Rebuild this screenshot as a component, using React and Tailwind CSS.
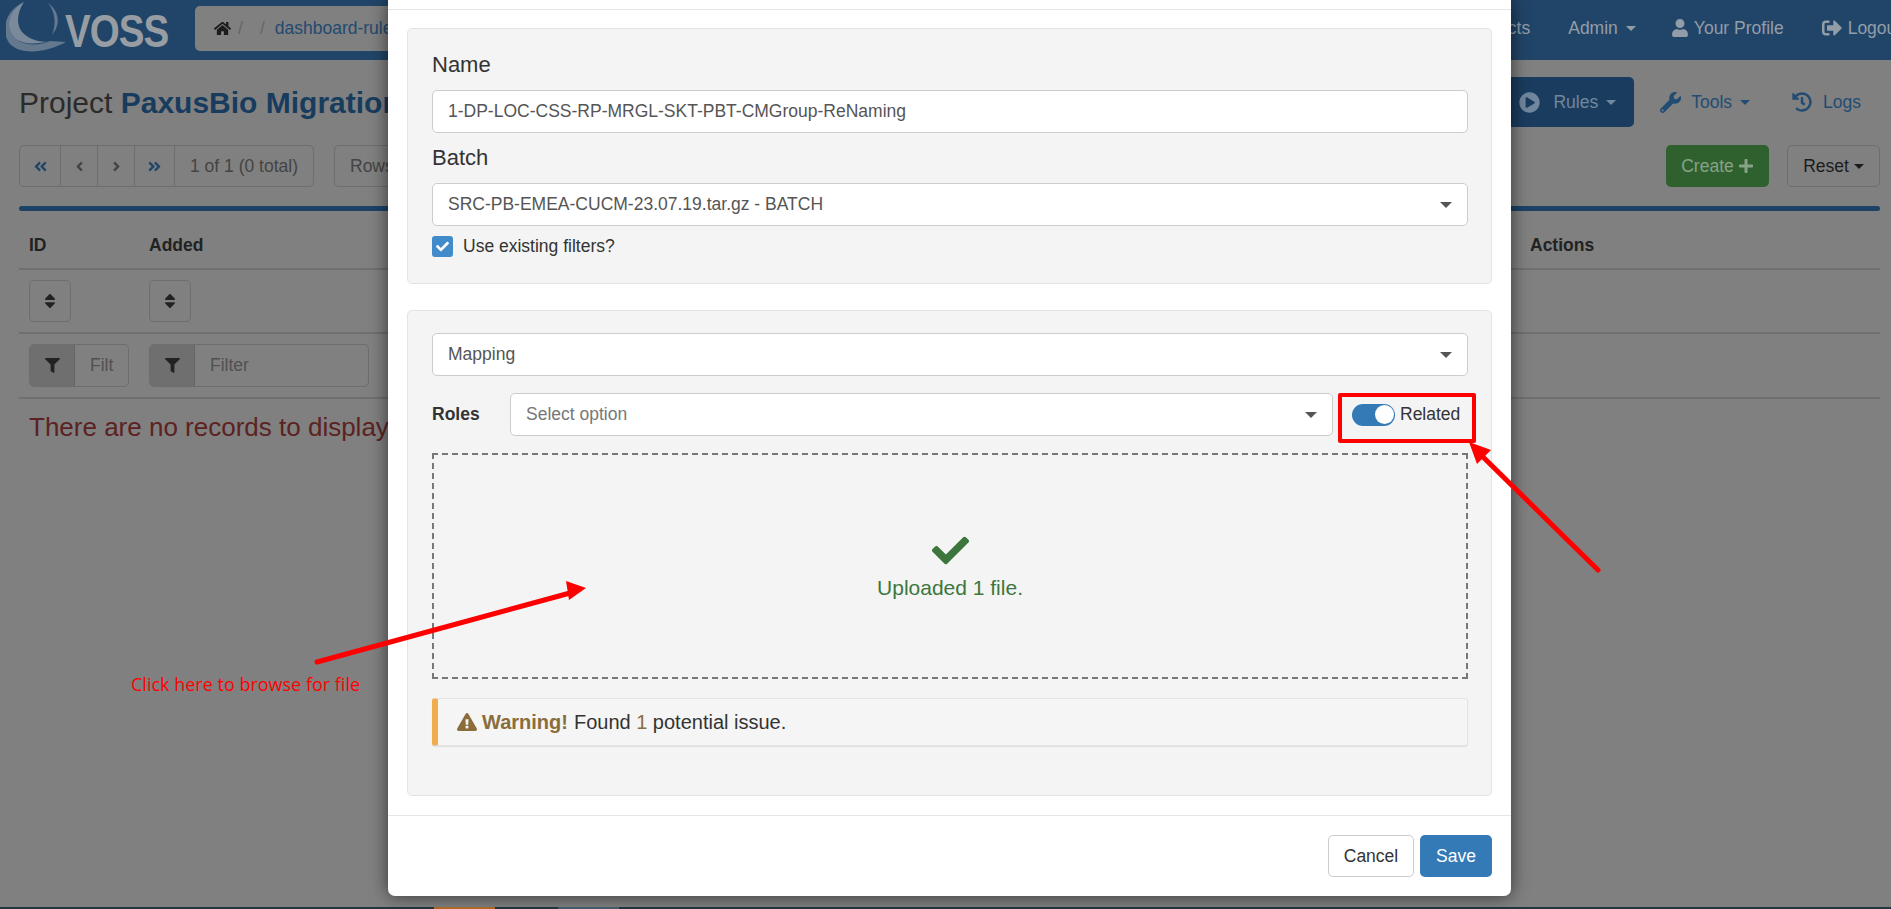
import {
  FaHome,
  FaCheck,
  FaExclamationTriangle,
  FaFilter,
  FaSort,
  FaPlus,
  FaUser,
  FaSignOutAlt,
  FaAngleDoubleLeft,
  FaAngleDoubleRight,
  FaAngleLeft,
  FaAngleRight,
  FaPlayCircle,
  FaWrench,
  FaHistory,
} from "react-icons/fa";

// triangulito de bootstrap para dropdowns
function Caret({ className = "" }) {
  return (
    <span
      className={`inline-block w-0 h-0 border-x-[5px] border-x-transparent border-t-[5px] ${className}`}
    />
  );
}

function SelectBox({ text, muted, className = "" }) {
  return (
    <div
      className={`h-[43px] bg-white border border-[#ccc] rounded-[5px] flex items-center justify-between pl-[15px] pr-[15px] ${className}`}
    >
      <span className={muted ? "text-[#777]" : "text-[#555]"}>{text}</span>
      <span className="w-0 h-0 border-x-[6px] border-x-transparent border-t-[6px] border-t-[#555]" />
    </div>
  );
}

function Logo() {
  return (
    <div className="w-[195px] shrink-0 flex items-center pl-[6px]">
      <svg width="60" height="56" viewBox="0 0 60 56" className="shrink-0 mt-[-4px]">
        <path
          d="M18 2 C4 9 -1 24 6 35 C13 45 30 47 44 41 L60 42 C42 52 16 56 4 44 C-6 32 -1 10 18 2 Z"
          fill="#64788e"
        />
        <path
          d="M18 2 C10 14 10 27 18 34 C26 41 38 43 44 41 C30 45 13 45 6 35 C-1 24 4 9 18 2 Z"
          fill="#7a8a9b"
        />
        <path d="M42 3 C52 10 56 23 46 35 C50 25 50 13 42 3 Z" fill="#64788e" />
      </svg>
      <span className="text-[47px] leading-none font-bold text-[#979da3] tracking-tight scale-x-[0.82] origin-left -ml-[1px]">
        VOSS
      </span>
    </div>
  );
}

function NavBar() {
  return (
    <div className="h-[60px] shrink-0 bg-[#214568] flex items-center text-[#939da8]">
      <Logo />
      <div className="w-[1000px] h-[45px] shrink-0 bg-[#808080] rounded-[5px] flex items-center pl-[19px] mt-[-3px]">
        <FaHome className="text-[#1c1c1c] text-[17px]" />
        <span className="ml-[7px] text-[#666]">/</span>
        <span className="ml-[17px] text-[#666]">/</span>
        <span className="ml-[10px] text-[#234a70]">dashboard-rules</span>
      </div>
      <div className="shrink-0 ml-[272px] flex items-center mt-[-4px]">
        <span>Projects</span>
        <span className="ml-[38px]">Admin</span>
        <Caret className="ml-[8px] border-t-[#939da8]" />
        <FaUser className="ml-[35px] text-[18px]" />
        <span className="ml-[5px]">Your Profile</span>
        <FaSignOutAlt className="ml-[38px] text-[20px]" />
        <span className="ml-[6px]">Logout</span>
      </div>
    </div>
  );
}

function Pager() {
  const cell = "h-full flex items-center justify-center border-r border-[#6d6d6d]";
  return (
    <div className="h-[42px] w-[295px] border border-[#6d6d6d] rounded-[5px] flex items-center text-[#444]">
      <div className={`${cell} w-[41px] text-[#1f4568] text-[15px]`}>
        <FaAngleDoubleLeft />
      </div>
      <div className={`${cell} w-[37px] text-[15px]`}>
        <FaAngleLeft />
      </div>
      <div className={`${cell} w-[37px] text-[15px]`}>
        <FaAngleRight />
      </div>
      <div className={`${cell} w-[40px] text-[#1f4568] text-[15px]`}>
        <FaAngleDoubleRight />
      </div>
      <div className="flex-1 text-center">1 of 1 (0 total)</div>
    </div>
  );
}

function FilterBox({ width, text }) {
  return (
    <div className={`${width} h-[43px] border border-[#6d6d6d] rounded-[5px] flex items-center overflow-hidden`}>
      <div className="w-[45px] h-full shrink-0 bg-[#6f6f6f] border-r border-[#666] flex items-center justify-center text-[#222] text-[15px]">
        <FaFilter />
      </div>
      <span className="pl-[15px] text-[#505050]">{text}</span>
    </div>
  );
}

function SortBtn() {
  return (
    <div className="w-[42px] h-[42px] border border-[#6d6d6d] rounded-[5px] flex items-center justify-center text-[#222] text-[18px]">
      <FaSort />
    </div>
  );
}

function BackgroundPage() {
  return (
    <div className="h-screen overflow-hidden bg-[#808080] flex flex-col">
      <NavBar />
      <div className="flex-1 pl-[19px] pr-[11px] text-[#222]">
        <div className="mt-[17px] h-[50px] flex items-center justify-between">
          <h1 className="text-[30px] text-[#2b2b2b]">
            Project <span className="font-bold text-[#173c5e]">PaxusBio Migration</span>
          </h1>
          <div className="flex items-center text-[#234c73]">
            <div className="h-[50px] rounded-[5px] bg-[#1a3d5f] text-[#71879d] flex items-center pl-[19px] pr-[18px]">
              <FaPlayCircle className="text-[21px]" />
              <span className="ml-[13px]">Rules</span>
              <Caret className="ml-[8px] border-t-[#71879d]" />
            </div>
            <FaWrench className="ml-[26px] text-[21px]" />
            <span className="ml-[10px]">Tools</span>
            <Caret className="ml-[8px] border-t-[#234c73]" />
            <FaHistory className="ml-[42px] text-[20px]" />
            <span className="ml-[11px] mr-[19px]">Logs</span>
          </div>
        </div>

        <div className="mt-[18px] flex items-center justify-between">
          <div className="flex items-center">
            <Pager />
            <div className="ml-[20px] h-[42px] border border-[#6d6d6d] rounded-[5px] flex items-center px-[15px] text-[#444]">
              Rows: 25
            </div>
          </div>
          <div className="flex items-center">
            <div className="w-[103px] h-[42px] bg-[#2f612f] rounded-[5px] text-[#88a288] flex items-center justify-center">
              Create
              <FaPlus className="ml-[4px] text-[16px]" />
            </div>
            <div className="ml-[18px] w-[93px] h-[42px] border border-[#6d6d6d] rounded-[5px] flex items-center justify-center text-[#1c1c1c]">
              Reset
              <Caret className="ml-[5px] border-t-[#1c1c1c]" />
            </div>
          </div>
        </div>

        <div className="mt-[19px] h-[5px] rounded-full bg-[#1c4266]" />

        <div className="grid grid-cols-[120px_1fr_350px] h-[59px] pt-[12px] items-center border-b-2 border-[#6f6f6f] pl-[10px] font-bold text-[#222]">
          <div>ID</div>
          <div>Added</div>
          <div>Actions</div>
        </div>
        <div className="grid grid-cols-[120px_1fr] h-[64px] items-center border-b-2 border-[#6f6f6f] pl-[10px]">
          <SortBtn />
          <SortBtn />
        </div>
        <div className="grid grid-cols-[120px_1fr] h-[65px] items-center border-b-2 border-[#6f6f6f] pl-[10px]">
          <FilterBox width="w-[100px]" text="Filt" />
          <FilterBox width="w-[220px]" text="Filter" />
        </div>
        <div className="pl-[10px] mt-[12px] text-[26px] leading-[32px] text-[#5c2222]">
          There are no records to display
        </div>
      </div>

      {/* barra inferior de la pagina */}
      <div className="h-[2px] shrink-0 bg-[#24363f] flex">
        <div className="ml-[434px] w-[61px] bg-[#b46d28]" />
        <div className="ml-[63px] w-[61px] bg-[#46606c]" />
      </div>
    </div>
  );
}

function Modal() {
  return (
    <div className="absolute left-[388px] top-0 w-[1123px] bg-white rounded-b-[7px] shadow-[0_0_18px_rgba(0,0,0,0.6)] text-[17.5px] text-[#333]">
      <div className="h-[10px] border-b border-[#e5e5e5]" />

      <div className="px-[19px] pt-[18px] pb-[19px] border-b border-[#e5e5e5]">
        {/* Primer panel */}
        <div className="h-[256px] bg-[#f4f4f4] border border-[#e3e3e3] rounded-[5px] pl-[24px] pr-[23px] pt-[18px]">
          <div className="h-[36px] leading-[36px] mb-[7px] text-[22px]">Name</div>
          <div className="h-[43px] bg-white border border-[#ccc] rounded-[5px] flex items-center px-[15px] text-[#555]">
            1-DP-LOC-CSS-RP-MRGL-SKT-PBT-CMGroup-ReNaming
          </div>
          <div className="h-[36px] leading-[36px] mt-[7px] mb-[7px] text-[22px]">Batch</div>
          <SelectBox text="SRC-PB-EMEA-CUCM-23.07.19.tar.gz - BATCH" />
          <div className="mt-[10px] h-[21px] flex items-center">
            <div className="w-[21px] h-[21px] bg-[#428bca] rounded-[3px] flex items-center justify-center text-white text-[13px]">
              <FaCheck />
            </div>
            <span className="ml-[10px]">Use existing filters?</span>
          </div>
        </div>

        {/* Segundo panel */}
        <div className="mt-[26px] h-[486px] bg-[#f4f4f4] border border-[#e3e3e3] rounded-[5px] pl-[24px] pr-[23px] pt-[22px]">
          <SelectBox text="Mapping" />
          <div className="mt-[17px] flex items-center">
            <span className="w-[78px] shrink-0 font-bold">Roles</span>
            <SelectBox text="Select option" muted className="w-[823px] shrink-0" />
            <div className="ml-[19px] w-[43px] h-[22px] shrink-0 rounded-full bg-[#337ab7] flex items-center justify-end pr-px">
              <span className="w-[19px] h-[19px] rounded-full bg-white" />
            </div>
            <span className="ml-[5px]">Related</span>
          </div>
          <div className="mt-[17px] h-[226px] border-2 border-dashed border-[#777] flex flex-col items-center justify-center pt-[4px]">
            <FaCheck className="text-[37px] text-[#3c763d]" />
            <div className="mt-[3px] text-[21px] text-[#3c763d]">Uploaded 1 file.</div>
          </div>
          <div className="mt-[19px] h-[48px] bg-[#f5f5f5] border border-[#e3e3e3] border-l-[6px] border-l-[#f0ad4e] rounded-[3px] shadow-[0_1px_1px_rgba(0,0,0,0.08)] flex items-center pl-[19px] text-[20px]">
            <FaExclamationTriangle className="text-[20px] text-[#8a6d3b]" />
            <b className="ml-[5px] text-[#8a6d3b]">Warning!</b>
            <span className="ml-[6px]">
              Found <span className="text-[#8a6d3b]">1</span> potential issue.
            </span>
          </div>
        </div>
      </div>

      <div className="h-[80px] flex items-center justify-end px-[19px]">
        <div className="w-[86px] h-[42px] bg-white border border-[#ccc] rounded-[5px] flex items-center justify-center">
          Cancel
        </div>
        <div className="ml-[6px] w-[72px] h-[42px] bg-[#337ab7] rounded-[5px] text-white flex items-center justify-center">
          Save
        </div>
      </div>
    </div>
  );
}

// Anotaciones rojas pintadas encima de la captura
function Annotations() {
  return (
    <>
      <div className="absolute left-[1338px] top-[393px] w-[138px] h-[50px] border-[4px] border-[#ff0000] rounded-[2px]" />
      <svg className="absolute left-0 top-0 pointer-events-none" width="1891" height="909">
        <line x1="317" y1="662" x2="570" y2="593" stroke="#ff0000" strokeWidth="5" strokeLinecap="round" />
        <polygon points="586,588 566,581 569,600" fill="#ff0000" />
        <line x1="1598" y1="570" x2="1480" y2="454" stroke="#ff0000" strokeWidth="5" strokeLinecap="round" />
        <polygon points="1469,442 1491,450 1477,464" fill="#ff0000" />
      </svg>
      <div className="absolute left-[131px] top-[672px] font-['Open_Sans',sans-serif] text-[18px] leading-[24px] text-[#ff0000] whitespace-nowrap">
        Click here to browse for file
      </div>
    </>
  );
}

export default function App() {
  return (
    <div className="relative h-screen overflow-hidden font-['Liberation_Sans',Arial,sans-serif] text-[17.5px]">
      <BackgroundPage />
      <Modal />
      <Annotations />
    </div>
  );
}
